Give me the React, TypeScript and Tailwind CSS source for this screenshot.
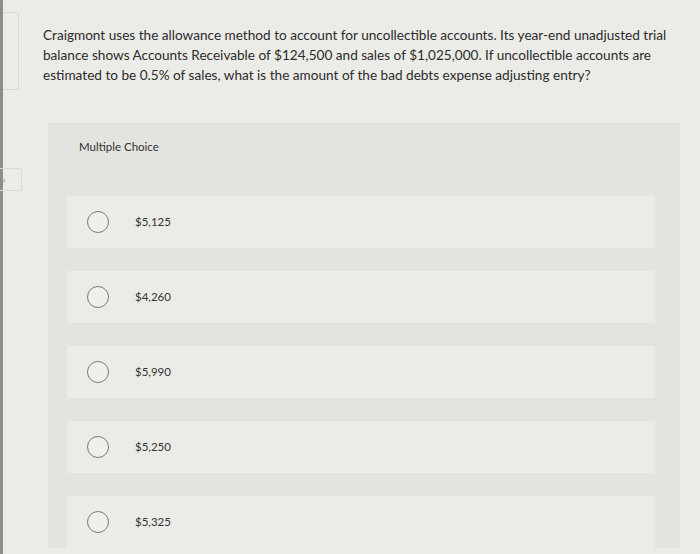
import * as React from "react"

const choices = ["$5,125", "$4,260", "$5,990", "$5,250", "$5,325"]

export default function App() {
  return (
    <div className="flex w-[700px] h-[554px] overflow-hidden bg-[#ebebe8] text-[#2b2b2b] font-['Lato','Liberation_Sans',sans-serif]">
      <div className="w-[3px] shrink-0 bg-[#8c8c8c]" />
      <div className="w-[19px] shrink-0 flex flex-col">
        <div className="mt-[12px] h-[78px] w-[16px] rounded-r-[3px] border border-l-0 border-[#d9d9d5]" />
        <div className="mt-[78px] -ml-[3px] h-[23px] w-[22px] border border-l-0 border-[#d9d9d5] text-[9px] leading-[21px] text-[#777] pl-[3px]">
          &lsaquo;
        </div>
      </div>
      <div className="flex-1 pl-[21px]">
        <p className="pt-[25px] text-[13.6px] leading-[20px] whitespace-nowrap">
          Craigmont uses the allowance method to account for uncollectible accounts. Its year-end unadjusted trial
          <br />
          balance shows Accounts Receivable of $124,500 and sales of $1,025,000. If uncollectible accounts are
          <br />
          estimated to be 0.5% of sales, what is the amount of the bad debts expense adjusting entry?
        </p>
        <section className="mt-[38px] ml-[5px] w-[632px] bg-[#e3e3df] pl-[19px] pr-[25px]">
          <h2 className="pt-[17px] pl-[12px] h-[73px] text-[11.5px] leading-[14px] text-[#333]">Multiple Choice</h2>
          <div className="flex flex-col gap-[23px]">
            {choices.map((c) => (
              <div key={c} className="h-[52px] flex items-center bg-[#ebebe8] pl-[20px]">
                <span className="w-[22px] h-[22px] rounded-full border-[1.5px] border-[#7a7a7a] bg-[#efefec]" />
                <span className="ml-[26px] text-[11.5px] text-[#333]">{c}</span>
              </div>
            ))}
          </div>
        </section>
      </div>
    </div>
  )
}
